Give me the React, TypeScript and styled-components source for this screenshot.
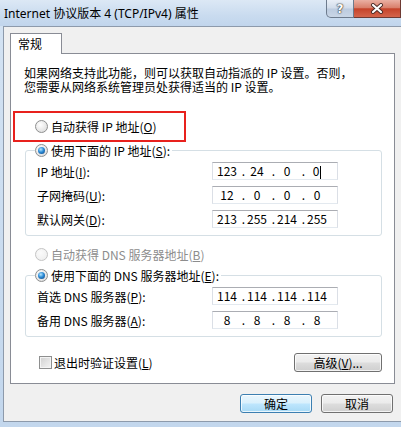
import React from "react";
import styled, { createGlobalStyle } from "styled-components";

const GlobalStyle = createGlobalStyle`
  html, body {
    margin: 0;
    padding: 0;
  }
  body {
    font-family: "SimSun", "Noto Sans CJK SC", sans-serif;
    font-size: 12px;
    color: #000;
  }
`;

const Window = styled.div`
  width: 401px;
  height: 427px;
  overflow: hidden;
  display: flex;
  flex-direction: column;
  background: linear-gradient(180deg, #d4e3f3 0%, #c3d7ed 100%);
`;

const TitleBar = styled.div`
  height: 26px;
  flex-shrink: 0;
  display: flex;
  align-items: flex-start;
  background: linear-gradient(180deg, #dce8f5 0%, #c9dbef 60%, #c1d5ec 100%);
`;

const Title = styled.div`
  flex: 1;
  padding: 6px 0 0 4px;
  font-family: "Noto Sans", "Noto Sans CJK SC", sans-serif;
  font-size: 12px;
  line-height: 15px;
  white-space: nowrap;
`;

const CaptionButton = styled.div<{ $close?: boolean }>`
  flex-shrink: 0;
  width: ${(p) => (p.$close ? "47px" : "28px")};
  height: 18px;
  box-sizing: border-box;
  display: flex;
  align-items: center;
  justify-content: center;
  border: 1px solid ${(p) => (p.$close ? "#6e3a33" : "#6d7b8d")};
  border-top: none;
  border-left: ${(p) => (p.$close ? "none" : undefined)};
  border-bottom-left-radius: ${(p) => (p.$close ? "0" : "5px")};
  background: ${(p) =>
    p.$close
      ? "linear-gradient(180deg, #eab0a3 0%, #d9806c 45%, #c5432a 52%, #d4644b 100%)"
      : "linear-gradient(180deg, #e9eff7 0%, #d1dcea 48%, #bccbdf 52%, #c9d6e6 100%)"};
  font-family: "DejaVu Sans", sans-serif;
  font-weight: bold;
  font-size: 12px;
  color: #fff;
  text-shadow: 0 0 1px #333, 0 0 1px #333, 0 0 2px #555;
`;

const Client = styled.div`
  flex: 1;
  margin: 0 0 5px 3px;
  background: #f0f0f0;
  border-top: 1px solid #8d9aab;
  border-left: 1px solid #8d9aab;
  border-bottom: 1px solid #8d9aab;
  display: flex;
  flex-direction: column;
`;

const TabStrip = styled.div`
  display: flex;
  padding: 6px 0 0 6px;
`;

const Tab = styled.div`
  position: relative;
  z-index: 1;
  width: 52px;
  height: 21px;
  box-sizing: border-box;
  margin-bottom: -1px;
  padding-left: 7px;
  border: 1px solid #898c95;
  border-bottom: none;
  background: #fff;
  line-height: 19px;
`;

const Panel = styled.div`
  margin-left: 6px;
  width: 385px;
  height: 331px;
  box-sizing: border-box;
  border: 1px solid #898c95;
  background: #fff;
  padding: 12px 12px 0 14px;
`;

const Description = styled.div`
  margin-left: -1px;
  line-height: 14px;
  white-space: nowrap;
`;

const Highlight = styled.div`
  margin: 17px 0 0 -12px;
  width: 173px;
  height: 31px;
  box-sizing: border-box;
  border: 2px solid #e8211d;
  display: flex;
  align-items: center;
  gap: 3px;
  padding-left: 20px;
  white-space: nowrap;
`;

const Radio = styled.span<{ $checked?: boolean; $disabled?: boolean }>`
  flex-shrink: 0;
  width: 13px;
  height: 13px;
  box-sizing: border-box;
  border-radius: 50%;
  border: 1px solid ${(p) => (p.$disabled ? "#c4c4c4" : "#8e8f8f")};
  background: ${(p) =>
    p.$disabled
      ? "radial-gradient(circle at 40% 35%, #fbfbfb, #ececec)"
      : "radial-gradient(circle at 40% 35%, #ffffff, #d6d6d6)"};
  display: flex;
  align-items: center;
  justify-content: center;
  &::after {
    content: "";
    display: ${(p) => (p.$checked ? "block" : "none")};
    width: 7px;
    height: 7px;
    border-radius: 50%;
    background: radial-gradient(circle at 40% 35%, #b6e6ff 0%, #2b8bd6 45%, #0d3c78 100%);
  }
`;

const Group = styled.fieldset<{ $top: number }>`
  margin: ${(p) => p.$top}px 0 0 0;
  padding: 4px 0 7px 10px;
  min-width: 0;
  border: 1px solid #d5dfe5;
  border-radius: 3px;
`;

const Legend = styled.legend`
  padding: 0 2px 0 0;
  margin-left: -1px;
  height: 16px;
  display: flex;
  align-items: center;
  gap: 3px;
  background: #fff;
  white-space: nowrap;
`;

const Rows = styled.div`
  display: grid;
  grid-template-columns: 176px 126px;
  grid-auto-rows: 18px;
  row-gap: 6px;
  align-items: center;
`;

const FieldLabel = styled.span`
  padding-left: 1px;
  white-space: nowrap;
`;

const IpBox = styled.div`
  height: 18px;
  box-sizing: border-box;
  border: 1px solid #dbdfe6;
  border-top-color: #abadb3;
  border-bottom-color: #e3e9ef;
  background: #fff;
  display: grid;
  grid-template-columns: 1fr 6px 1fr 6px 1fr 6px 1fr;
  align-items: center;
  padding: 0 8px 0 2px;
  line-height: 16px;
`;

const Octet = styled.span`
  text-align: center;
  white-space: nowrap;
`;

const Dot = styled.span`
  text-align: right;
`;

const Caret = styled.span`
  display: inline-block;
  width: 1px;
  height: 13px;
  margin-left: 1px;
  background: #000;
  vertical-align: middle;
`;

const OptionRow = styled.div<{ $disabled?: boolean }>`
  margin-top: 10px;
  padding-left: 10px;
  height: 16px;
  display: flex;
  align-items: center;
  gap: 3px;
  color: ${(p) => (p.$disabled ? "#8d8d8d" : "#000")};
  white-space: nowrap;
`;

const Footer = styled.div`
  margin-top: 16px;
  height: 19px;
  padding-left: 14px;
  display: flex;
  align-items: center;
  justify-content: space-between;
`;

const CheckLabel = styled.label`
  display: flex;
  align-items: center;
  gap: 2px;
  white-space: nowrap;
`;

const CheckBox = styled.span`
  width: 13px;
  height: 13px;
  box-sizing: border-box;
  border: 1px solid #8e8f8f;
  background: linear-gradient(135deg, #cfcfcf 0%, #e6e6e6 60%, #f4f4f4 100%);
  box-shadow: inset 0 0 0 1px #f4f4f4;
`;

const PushButton = styled.button<{ $primary?: boolean; $width: number }>`
  width: ${(p) => p.$width}px;
  height: 19px;
  box-sizing: border-box;
  padding: 0;
  border: 1px solid ${(p) => (p.$primary ? "#3c7fb1" : "#707070")};
  border-radius: 3px;
  background: ${(p) =>
    p.$primary
      ? "linear-gradient(180deg, #eaf6fd 0%, #d9f0fc 48%, #bee6fd 52%, #a7d9f5 100%)"
      : "linear-gradient(180deg, #f2f2f2 0%, #ebebeb 48%, #dddddd 52%, #cfcfcf 100%)"};
  box-shadow: inset 0 0 0 1px rgba(255, 255, 255, 0.75);
  font-family: inherit;
  font-size: 12px;
  line-height: 17px;
  color: #000;
`;

const ButtonRow = styled.div`
  margin-top: 10px;
  padding-right: 8px;
  display: flex;
  justify-content: flex-end;
  gap: 9px;
`;

function Accel({ text, k, after = "" }: { text: string; k: string; after?: string }) {
  return (
    <>
      {text}(<u>{k}</u>){after}
    </>
  );
}

function IpField({ value, caret }: { value: string[]; caret?: boolean }) {
  return (
    <IpBox>
      {value.map((v, i) => (
        <React.Fragment key={i}>
          {i > 0 && <Dot>.</Dot>}
          <Octet>
            {v}
            {caret && i === value.length - 1 && <Caret />}
          </Octet>
        </React.Fragment>
      ))}
    </IpBox>
  );
}

const ipRows = [
  { label: "IP 地址", k: "I", value: ["123", "24", "0", "0"], caret: true },
  { label: "子网掩码", k: "U", value: ["12", "0", "0", "0"] },
  { label: "默认网关", k: "D", value: ["213", "255", "214", "255"] },
];

const dnsRows = [
  { label: "首选 DNS 服务器", k: "P", value: ["114", "114", "114", "114"] },
  { label: "备用 DNS 服务器", k: "A", value: ["8", "8", "8", "8"] },
];

function CloseGlyph() {
  return (
    <svg width="14" height="11" viewBox="0 0 14 11">
      <path d="M3 2 L11 9 M11 2 L3 9" stroke="#4a2a26" strokeWidth="4" strokeLinecap="round" />
      <path d="M3 2 L11 9 M11 2 L3 9" stroke="#fff" strokeWidth="2.2" strokeLinecap="round" />
    </svg>
  );
}

export default function App() {
  return (
    <Window>
      <GlobalStyle />
      <TitleBar>
        <Title>Internet 协议版本 4 (TCP/IPv4) 属性</Title>
        <CaptionButton>?</CaptionButton>
        <CaptionButton $close>
          <CloseGlyph />
        </CaptionButton>
      </TitleBar>
      <Client>
        <TabStrip>
          <Tab>常规</Tab>
        </TabStrip>
        <Panel>
          <Description>
            如果网络支持此功能，则可以获取自动指派的 IP 设置。否则，
            <br />
            您需要从网络系统管理员处获得适当的 IP 设置。
          </Description>

          <Highlight>
            <Radio />
            <span>
              <Accel text="自动获得 IP 地址" k="O" />
            </span>
          </Highlight>

          <Group $top={0}>
            <Legend>
              <Radio $checked />
              <span>
                <Accel text="使用下面的 IP 地址" k="S" after=":" />
              </span>
            </Legend>
            <Rows>
              {ipRows.map((r) => (
                <React.Fragment key={r.k}>
                  <FieldLabel>
                    <Accel text={r.label} k={r.k} after=":" />
                  </FieldLabel>
                  <IpField value={r.value} caret={r.caret} />
                </React.Fragment>
              ))}
            </Rows>
          </Group>

          <OptionRow $disabled>
            <Radio $disabled />
            <span>
              <Accel text="自动获得 DNS 服务器地址" k="B" />
            </span>
          </OptionRow>

          <Group $top={5}>
            <Legend>
              <Radio $checked />
              <span>
                <Accel text="使用下面的 DNS 服务器地址" k="E" after=":" />
              </span>
            </Legend>
            <Rows>
              {dnsRows.map((r) => (
                <React.Fragment key={r.k}>
                  <FieldLabel>
                    <Accel text={r.label} k={r.k} after=":" />
                  </FieldLabel>
                  <IpField value={r.value} />
                </React.Fragment>
              ))}
            </Rows>
          </Group>

          <Footer>
            <CheckLabel>
              <CheckBox />
              <span>
                <Accel text="退出时验证设置" k="L" />
              </span>
            </CheckLabel>
            <PushButton $width={88}>
              <Accel text="高级" k="V" after="..." />
            </PushButton>
          </Footer>
        </Panel>
        <ButtonRow>
          <PushButton $primary $width={72}>
            确定
          </PushButton>
          <PushButton $width={72}>取消</PushButton>
        </ButtonRow>
      </Client>
    </Window>
  );
}
